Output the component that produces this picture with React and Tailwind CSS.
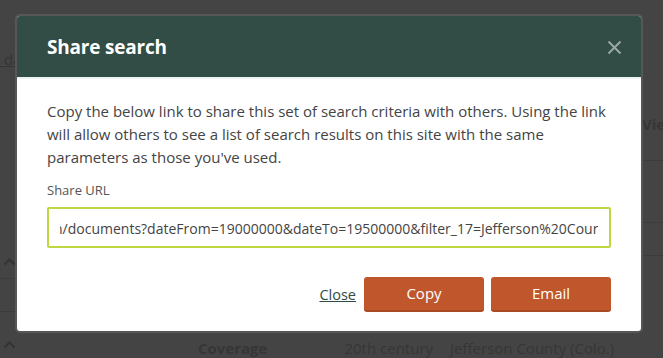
import React from 'react';

const url =
  'n/documents?dateFrom=19000000&dateTo=19500000&filter_17=Jefferson%20County%20(Colo.)&page=1';

const Chevron = () => (
  <svg width="13" height="9" viewBox="0 0 13 9">
    <path d="M1.5 7.5 L6.5 2.5 L11.5 7.5" fill="none" stroke="#333" strokeWidth="2" />
  </svg>
);

// faint page that sits behind the overlay
const Backdrop = () => (
  <div className="h-full flex text-[#363636]">
    <div className="w-[18px] shrink-0 flex flex-col">
      <div className="h-[48px]" />
      <div className="-ml-[6px] text-[15px] underline whitespace-nowrap">r da</div>
      <div className="h-[186px]" />
      <div className="pl-[3px]"><Chevron /></div>
      <div className="mt-[12px] border-t border-[#3c3c3c]" />
      <div className="mt-[32px] border-t border-[#3c3c3c]" />
      <div className="mt-[28px] pl-[3px]"><Chevron /></div>
    </div>
    <div className="flex-1 min-w-0 flex flex-col justify-end">
      <div className="flex items-center pl-[180px] gap-[30px] -mb-[1px] text-[15px] whitespace-nowrap">
        <span className="font-bold">Coverage</span>
        <span className="ml-[47px] flex gap-[17px]">
          <span>20th century</span>
          <span>Jefferson County (Colo.)</span>
        </span>
      </div>
    </div>
    <div className="w-[21px] shrink-0 flex flex-col">
      <div className="h-[113px]" />
      <div className="text-[15px] font-bold whitespace-nowrap">View</div>
      <div className="mt-[24px] border-t border-[#3c3c3c]" />
      <div className="mt-[61px] border-t border-[#3c3c3c]" />
      <div className="mt-[32px] border-t border-[#3c3c3c]" />
    </div>
  </div>
);

const Button = ({ children }) => (
  <button className="w-[120px] h-[35px] rounded-[3px] bg-[#c0572c] border-b-2 border-[#a84a22] text-white text-[15px]">
    {children}
  </button>
);

export default function App() {
  return (
    <div
      className="relative w-[663px] h-[358px] overflow-hidden bg-[#444444]"
      style={{ fontFamily: '"Open Sans", "Liberation Sans", sans-serif' }}
    >
      <Backdrop />

      {/* Share search dialog */}
      <div className="absolute left-[15px] top-[14px] w-[628px] rounded-[5px] border-2 border-[#575757] bg-white overflow-hidden">
        <div className="h-[63px] bg-[#324c46] border-b-2 border-[#eef1f2] flex items-center justify-between pl-[30px] pr-[20px]">
          <h2 className="mt-[2px] text-[19px] font-bold text-white tracking-[-0.2px]">Share search</h2>
          <svg width="15" height="15" viewBox="0 0 15 15" className="mt-[2px] mr-[-1px]">
            <path d="M1.5 1.5 L13.5 13.5 M13.5 1.5 L1.5 13.5" stroke="#9aa8a4" strokeWidth="2" />
          </svg>
        </div>

        <div className="px-[30px] pt-[21px] pb-[19px]">
          <p className="-mr-[10px] text-[15px] leading-[23px] text-[#444]">
            Copy the below link to share this set of search criteria with others. Using the link
            will allow others to see a list of search results on this site with the same
            parameters as those you've used.
          </p>

          <div className="mt-[12px] text-[13px] leading-[18px] text-[#555]">Share URL</div>

          <div className="mt-[8px] h-[41px] border-2 border-[#bfd641] rounded-[2px] px-[11px] flex items-center">
            <div className="overflow-hidden whitespace-nowrap w-full">
              <span className="inline-block -ml-[6px] text-[14px] text-[#444]">{url}</span>
            </div>
          </div>

          <div className="mt-[29px] flex justify-end items-center gap-[7px]">
            <a href="#" className="mr-[1px] text-[14.5px] text-[#2f4b44] underline">
              Close
            </a>
            <Button>Copy</Button>
            <Button>Email</Button>
          </div>
        </div>
      </div>
    </div>
  );
}
